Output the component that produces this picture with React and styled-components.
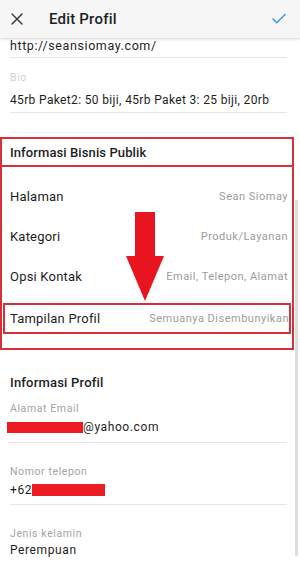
import React from "react";
import styled, { createGlobalStyle } from "styled-components";
import { X, Check } from "lucide-react";

const GlobalStyle = createGlobalStyle`
  body {
    margin: 0;
    background: #fff;
    font-family: Roboto, "Noto Sans", sans-serif;
  }
`;

const Screen = styled.div`
  position: relative;
  width: 300px;
  height: 573px;
  overflow: hidden;
  background: #fff;
`;

// header
const Header = styled.header`
  position: relative;
  z-index: 2;
  height: 38px;
  display: flex;
  align-items: center;
  padding: 0 12px 0 7px;
  background: #f6f6f6;
  box-shadow: 0 1px 3px rgba(0, 0, 0, 0.18);
`;

const Title = styled.h1`
  flex: 1;
  margin: 0 0 0 22px;
  font-size: 15px;
  font-weight: 500;
  color: #1e1e1e;
  letter-spacing: 0.2px;
`;

// form fields
const Body = styled.div`
  padding: 0 13px 0 10px;
`;

const Field = styled.div`
  padding: ${(p) => p.$pad || "0"};
  border-bottom: ${(p) => (p.$last ? "none" : "1px solid #e6e6e6")};
  margin-left: ${(p) => (p.$wide ? "-2px" : "0")};
  padding-left: ${(p) => (p.$wide ? "2px" : "0")};
`;

const Label = styled.div`
  font-size: 10.5px;
  line-height: 14px;
  color: ${(p) => (p.$faint ? "#cfcfcf" : "#a4a4a4")};
  letter-spacing: 0.6px;
`;

const Value = styled.div`
  font-size: ${(p) => p.$size || "12px"};
  line-height: 16px;
  color: #1e1e1e;
  letter-spacing: ${(p) => p.$spacing || "0.6px"};
  white-space: nowrap;
  overflow: hidden;
  display: flex;
  align-items: center;
  margin-top: ${(p) => p.$mt || 0}px;
`;

const Divider = styled.div`
  height: 1px;
  background: #efefef;
  margin: 19px 0 4px;
`;

// business section, boxed in red
const RedBox = styled.section`
  position: relative;
  width: 290px;
  border: 2px solid #d63039;
`;

const BoxHeader = styled.div`
  height: 26px;
  display: flex;
  align-items: center;
  padding-left: 8px;
  border-bottom: 2px solid #d63039;
  font-size: 13px;
  font-weight: 500;
  color: #1e1e1e;
  letter-spacing: 0.1px;
`;

const Rows = styled.div`
  padding: 9px 0 14px;
`;

const Row = styled.div`
  height: ${(p) => (p.$boxed ? "27px" : "40px")};
  display: flex;
  align-items: center;
  justify-content: space-between;
  padding: ${(p) => (p.$boxed ? "0 0 0 5px" : "0 4px 0 8px")};
  margin: ${(p) => (p.$boxed ? "7px 1px 0 1px" : "0")};
  border: ${(p) => (p.$boxed ? "2px solid #d63039" : "none")};
`;

const RowLabel = styled.span`
  font-size: 13px;
  color: #1e1e1e;
  letter-spacing: 0.2px;
`;

const RowValue = styled.span`
  font-size: 11px;
  color: #9c9c9c;
  letter-spacing: 0.5px;
`;

const Arrow = styled.svg`
  position: absolute;
  left: 122px;
  top: 73px;
`;

// profile info
const SectionTitle = styled.div`
  margin: 25px 0 12px 10px;
  font-size: 13px;
  font-weight: 500;
  color: #1e1e1e;
  letter-spacing: 0.2px;
`;

const Redact = styled.span`
  display: inline-block;
  width: ${(p) => p.$w}px;
  height: ${(p) => p.$h || 11}px;
  background: #ec1c24;
`;

const Scrollbar = styled.div`
  position: absolute;
  right: 2px;
  top: 200px;
  width: 3px;
  height: 356px;
  background: #dedede;
`;

const App = () => {
  return (
    <Screen>
      <GlobalStyle />
      <Header>
        <X size={20} strokeWidth={1.6} color="#333" />
        <Title>Edit Profil</Title>
        <Check size={18} strokeWidth={2} color="#3897f0" />
      </Header>

      <Body>
        <Field $pad="0 0 3px">
          <Value $size="12.5px">http://seansiomay.com/</Value>
        </Field>
        <Field $pad="13px 0 4px">
          <Label $faint>Bio</Label>
          <Value $spacing="0.35px" $mt={7}>
            45rb Paket2: 50 biji, 45rb Paket 3: 25 biji, 20rb
          </Value>
        </Field>
        <Divider />
      </Body>

      <RedBox>
        <BoxHeader>Informasi Bisnis Publik</BoxHeader>
        <Rows>
          <Row>
            <RowLabel>Halaman</RowLabel>
            <RowValue>Sean Siomay</RowValue>
          </Row>
          <Row>
            <RowLabel>Kategori</RowLabel>
            <RowValue>Produk/Layanan</RowValue>
          </Row>
          <Row>
            <RowLabel>Opsi Kontak</RowLabel>
            <RowValue>Email, Telepon, Alamat</RowValue>
          </Row>
          <Row $boxed>
            <RowLabel>Tampilan Profil</RowLabel>
            <RowValue>Semuanya Disembunyikan</RowValue>
          </Row>
        </Rows>
        <Arrow width="42" height="90" viewBox="0 0 42 90">
          <path d="M11 0 H31 V44 H40 L21 89 L2 44 H11 Z" fill="#e8141f" />
        </Arrow>
      </RedBox>

      <SectionTitle>Informasi Profil</SectionTitle>
      <Body>
        <Field $pad="0 0 7px" $wide>
          <Label>Alamat Email</Label>
          <Value $mt={3} style={{ marginLeft: -3 }}>
            <Redact $w={76} $h={11} />
            @yahoo.com
          </Value>
        </Field>
        <Field $pad="22px 0 6px">
          <Label>Nomor telepon</Label>
          <Value $mt={3}>
            +62
            <Redact $w={73} $h={12} />
          </Value>
        </Field>
        <Field $pad="22px 0 0" $last>
          <Label>Jenis kelamin</Label>
          <Value $mt={1}>Perempuan</Value>
        </Field>
      </Body>

      <Scrollbar />
    </Screen>
  );
};

export default App;
